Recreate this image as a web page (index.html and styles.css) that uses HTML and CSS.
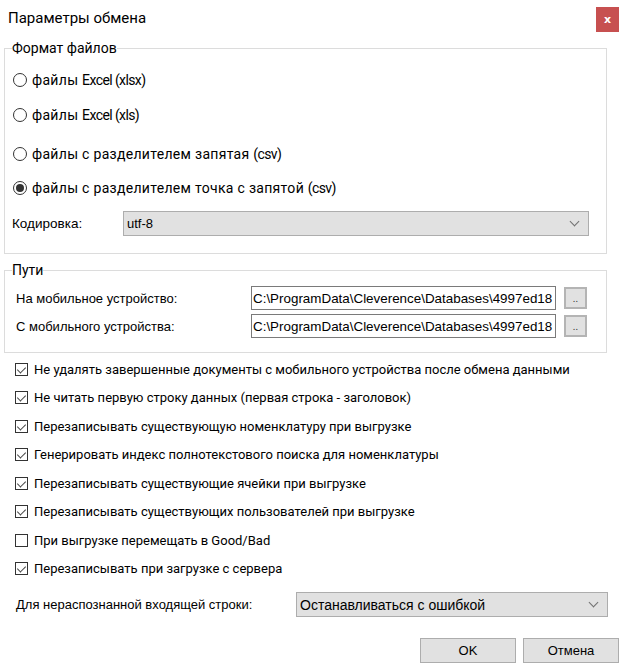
FILE: index.html
```html
<!DOCTYPE html>
<html lang="ru">
<head>
<meta charset="utf-8">
<title>Параметры обмена</title>
<link rel="stylesheet" href="styles.css">
</head>
<body>
<div class="dialog">
  <div class="titlebar">
    <span class="title">Параметры обмена</span>
    <span class="close">x</span>
  </div>

  <fieldset class="group group-format">
    <legend>Формат файлов</legend>
    <div class="radio r1"><span class="rb"></span><span class="rt">файлы <span class="lat">Excel (xlsx)</span></span></div>
    <div class="radio r2"><span class="rb"></span><span class="rt">файлы <span class="lat">Excel (xls)</span></span></div>
    <div class="radio r3"><span class="rb"></span><span class="rt">файлы с разделителем запятая <span class="lat">(csv)</span></span></div>
    <div class="radio r4"><span class="rb on"></span><span class="rt">файлы с разделителем точка с запятой <span class="lat">(csv)</span></span></div>
    <div class="enc-row">
      <span class="lbl enc-lbl">Кодировка:</span>
      <div class="select enc-select"><span class="val">utf-8</span><span class="arrow"></span></div>
    </div>
  </fieldset>

  <fieldset class="group group-paths">
    <legend>Пути</legend>
    <div class="path-row p1">
      <span class="lbl path-lbl">На мобильное устройство:</span>
      <div class="input"><span>C:\ProgramData\Cleverence\Databases\4997ed18</span></div>
      <div class="btn-small">..</div>
    </div>
    <div class="path-row p2">
      <span class="lbl path-lbl">С мобильного устройства:</span>
      <div class="input"><span>C:\ProgramData\Cleverence\Databases\4997ed18</span></div>
      <div class="btn-small">..</div>
    </div>
  </fieldset>

  <div class="checks">
    <div class="check"><span class="cb on"></span><span class="ct">Не удалять завершенные документы с мобильного устройства после обмена данными</span></div>
    <div class="check"><span class="cb on"></span><span class="ct">Не читать первую строку данных (первая строка - заголовок)</span></div>
    <div class="check"><span class="cb on"></span><span class="ct">Перезаписывать существующую номенклатуру при выгрузке</span></div>
    <div class="check"><span class="cb on"></span><span class="ct">Генерировать индекс полнотекстового поиска для номенклатуры</span></div>
    <div class="check"><span class="cb on"></span><span class="ct">Перезаписывать существующие ячейки при выгрузке</span></div>
    <div class="check"><span class="cb on"></span><span class="ct">Перезаписывать существующих пользователей при выгрузке</span></div>
    <div class="check"><span class="cb"></span><span class="ct">При выгрузке перемещать в Good/Bad</span></div>
    <div class="check"><span class="cb on"></span><span class="ct">Перезаписывать при загрузке с сервера</span></div>
  </div>

  <div class="unk-row">
    <span class="lbl unk-lbl">Для нераспознанной входящей строки:</span>
    <div class="select unk-select"><span class="val">Останавливаться с ошибкой</span><span class="arrow"></span></div>
  </div>

  <div class="buttons">
    <div class="btn ok">OK</div>
    <div class="btn cancel">Отмена</div>
  </div>
</div>
</body>
</html>
```

FILE: styles.css
```css
* { box-sizing: border-box; }
html, body { margin: 0; padding: 0; background: #fff; }
body {
  width: 622px;
  height: 669px;
  overflow: hidden;
  font-family: Roboto, "Noto Sans", sans-serif;
  font-size: 13px;
  color: #000;
}
.dialog { display: flex; flex-direction: column; }

.titlebar {
  height: 41px;
  display: flex;
  align-items: flex-start;
  justify-content: space-between;
}
.title {
  font-family: Roboto, sans-serif;
  font-size: 15px;
  margin: 9px 0 0 8px;
  line-height: 18px;
}
.close {
  width: 23px;
  height: 25px;
  margin: 7px 3px 0 0;
  background: #c75050;
  color: #fff;
  font-family: "DejaVu Sans", sans-serif;
  font-weight: bold;
  font-size: 11px;
  display: flex;
  align-items: center;
  justify-content: center;
}

.group {
  margin: 0 15px 0 4px;
  padding: 0;
  border: 1px solid #dcdcdc;
  min-width: 0;
}
.group legend {
  padding: 0;
  margin-left: 7px;
  line-height: 15px;
  font-size: 14px;
  font-family: Roboto, sans-serif;
}
.group-format { padding-bottom: 17px; }

.radio {
  height: 20px;
  display: flex;
  align-items: center;
  padding-left: 8px;
}
.rt { font-size: 14px; letter-spacing: 0.3px; }
.rt .lat { letter-spacing: -0.6px; }
.r1 { margin-top: 14px; }
.r2 { margin-top: 15px; }
.r3 { margin-top: 19px; }
.r4 { margin-top: 14px; }
.rb {
  width: 14px;
  height: 14px;
  border: 1px solid #333;
  border-radius: 50%;
  background: #fff;
  display: flex;
  align-items: center;
  justify-content: center;
  margin-right: 5px;
  flex: none;
}
.rb.on::after {
  content: "";
  width: 8px;
  height: 8px;
  border-radius: 50%;
  background: #333;
}

.lbl { font-family: "Liberation Sans", Arial, sans-serif; font-size: 13px; }

.enc-row {
  margin-top: 13px;
  display: flex;
  align-items: center;
  padding-left: 7px;
  height: 25px;
}
.enc-lbl { width: 111px; font-size: 13.5px; }
.select {
  height: 25px;
  background: #e1e1e1;
  border: 1px solid #adadad;
  display: flex;
  align-items: center;
  justify-content: space-between;
  padding: 0 10px 0 3px;
}
.enc-select { width: 466px; }
.enc-select .val { font-family: "Liberation Sans", Arial, sans-serif; }
.arrow {
  width: 7px;
  height: 7px;
  border-right: 1px solid #707070;
  border-bottom: 1px solid #707070;
  transform: rotate(45deg);
  margin-top: -4px;
}

.group-paths { margin-top: 9px; padding-bottom: 14px; }
.path-row {
  display: flex;
  align-items: center;
  height: 24px;
  padding-left: 11px;
}
.p1 { margin-top: 8px; }
.p2 { margin-top: 4px; }
.path-lbl { width: 235px; }
.input {
  width: 305px;
  height: 24px;
  border: 1px solid #7a7a7a;
  overflow: hidden;
  white-space: nowrap;
  display: flex;
  align-items: center;
  padding-left: 1px;
  font-family: "Liberation Sans", Arial, sans-serif;
  font-size: 13.4px;
}
.btn-small {
  width: 23px;
  height: 22px;
  margin-left: 8px;
  border: 2px solid #b4b4b4;
  background: #e1e1e1;
  font-size: 10px;
  display: flex;
  align-items: flex-end;
  justify-content: center;
  padding-bottom: 3px;
  line-height: 10px;
  color: #333;
}

.checks { margin-top: 2px; display: flex; flex-direction: column; }
.check {
  height: 28.5px;
  display: flex;
  align-items: center;
  padding-left: 15px;
}
.cb {
  width: 13px;
  height: 13px;
  border: 1px solid #333;
  background: #fff;
  margin-right: 6px;
  position: relative;
  flex: none;
}
.cb.on::after {
  content: "";
  position: absolute;
  left: 3px;
  top: 1px;
  width: 4px;
  height: 7px;
  border-right: 1px solid #444;
  border-bottom: 1px solid #444;
  transform: rotate(45deg);
}

.unk-row {
  margin-top: 9px;
  display: flex;
  align-items: center;
  padding-left: 16px;
  height: 25px;
}
.unk-lbl { width: 280px; }
.unk-select { width: 312px; }
.unk-select .val { font-family: "Liberation Sans", Arial, sans-serif; font-size: 14px; }

.buttons {
  margin-top: 21px;
  display: flex;
  justify-content: flex-end;
  padding-right: 3px;
  gap: 7px;
}
.btn {
  width: 96px;
  height: 25px;
  border: 1px solid #adadad;
  background: #e1e1e1;
  display: flex;
  align-items: center;
  justify-content: center;
  font-family: "Liberation Sans", Arial, sans-serif;
  font-size: 13px;
}
```
